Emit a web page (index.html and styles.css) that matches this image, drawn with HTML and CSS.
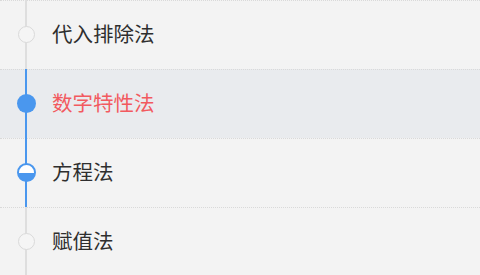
FILE: index.html
```html
<!DOCTYPE html>
<html lang="zh">
<head>
<meta charset="utf-8">
<link rel="stylesheet" href="styles.css">
</head>
<body>
<ul class="steps">
  <li class="step">
    <div class="rail rail-gray"><span class="dot dot-empty"></span></div>
    <span class="label">代入排除法</span>
  </li>
  <li class="step step-active">
    <div class="rail rail-blue"><span class="dot dot-full"></span></div>
    <span class="label label-red">数字特性法</span>
  </li>
  <li class="step">
    <div class="rail rail-blue"><span class="dot dot-half"></span></div>
    <span class="label">方程法</span>
  </li>
  <li class="step">
    <div class="rail rail-gray"><span class="dot dot-empty"></span></div>
    <span class="label">赋值法</span>
  </li>
</ul>
</body>
</html>
```

FILE: styles.css
```css
html, body {
  margin: 0;
  padding: 0;
  background: #f3f3f3;
}
body {
  width: 480px;
  height: 275px;
  overflow: hidden;
  font-family: "Noto Sans CJK SC", "Noto Sans", sans-serif;
}
.steps {
  list-style: none;
  margin: 0;
  padding: 0;
}
.step {
  display: flex;
  align-items: center;
  height: 68px;
  border-top: 1px dotted #d9d9d9;
}
.step-active {
  background: #e9ebee;
}
.rail {
  width: 52px;
  align-self: stretch;
  margin-top: -1px;
  display: flex;
  align-items: center;
  justify-content: center;
  flex-shrink: 0;
}
.rail-gray {
  background: linear-gradient(to right, transparent 25px, #dedede 25px, #dedede 27px, transparent 27px);
}
.rail-blue {
  background: linear-gradient(to right, transparent 25px, #4a97ee 25px, #4a97ee 27px, transparent 27px);
}
.dot {
  box-sizing: border-box;
  border-radius: 50%;
  display: block;
}
.dot-empty {
  width: 17px;
  height: 17px;
  border: 1px solid #dadada;
  background: #f5f5f5;
}
.dot-full {
  width: 19px;
  height: 19px;
  background: #4a97ee;
}
.dot-half {
  width: 19px;
  height: 19px;
  border: 2px solid #4a97ee;
  background: linear-gradient(to bottom, #ffffff 50%, #4a97ee 50%);
}
.label {
  font-size: 20.5px;
  color: #2e2e2e;
  line-height: 1;
  padding-bottom: 3px;
}
.label-red {
  color: #f25a5f;
}
```
